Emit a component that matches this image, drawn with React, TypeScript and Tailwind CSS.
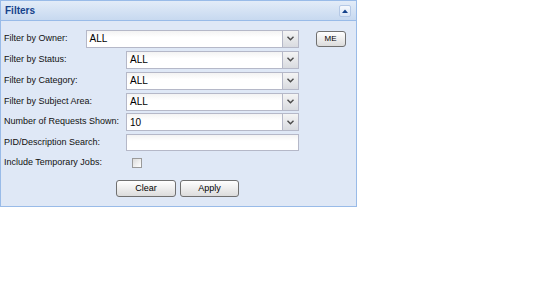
import React from "react";

const Arrow = () => (
  <div className="w-[16px] h-full border-l border-[#b5b8c8] bg-gradient-to-b from-[#f4f4f4] to-[#d9dbe0] flex items-center justify-center">
    <svg width="7" height="5" viewBox="0 0 7 5">
      <path d="M0.5 0.8 L3.5 3.8 L6.5 0.8" fill="none" stroke="#4a4a4a" strokeWidth="1.4" />
    </svg>
  </div>
);

const Select = ({ value, w }: { value: string; w: string }) => (
  <div className={`${w} h-[18px] flex border border-[#b5b8c8] bg-white`}>
    <div className="flex-1 flex items-center pl-[3px] text-[10px] text-black bg-gradient-to-b from-[#f3f3f3] to-white to-[40%]">{value}</div>
    <Arrow />
  </div>
);

const Row = ({ label, h, children }: { label: string; h: string; children?: React.ReactNode }) => (
  <div className={`flex items-center ${h}`}>
    {label && <div className="text-[9px] text-[#111]">{label}</div>}
    {children}
  </div>
);

export default function App() {
  return (
    <div className="w-[540px] h-[304px] bg-white" style={{ fontFamily: "'Liberation Sans', Arial, sans-serif" }}>
      <div className="w-[357px] h-[207px] border border-[#99bbe8] flex flex-col">
        <div className="h-[20px] flex items-center justify-between pl-[4px] pr-[5px] bg-gradient-to-b from-[#e3ecf8] to-[#c7d9f0] border-b border-[#99bbe8]">
          <span className="text-[10px] font-bold text-[#15428b]">Filters</span>
          <div className="w-[12px] h-[12px] rounded-[2px] bg-gradient-to-b from-[#f6f9fd] to-[#dbe6f5] border border-[#b5c9e6] flex items-center justify-center">
            <svg width="6" height="4" viewBox="0 0 6 4"><path d="M0 4 L3 0.5 L6 4 Z" fill="#15428b" /></svg>
          </div>
        </div>
        <div className="flex-1 bg-[#dfe8f6] flex flex-col pl-[3px] pt-[7px]">
          <Row label="Filter by Owner:" h="h-[21px]">
            <div className="ml-[18px]"><Select value="ALL" w="w-[213px]" /></div>
            <div className="ml-[17px] w-[30px] h-[16px] rounded-[3px] border border-[#707070] bg-gradient-to-b from-white to-[#dcdcdc] flex items-center justify-center text-[8px] text-black">ME</div>
          </Row>
          <Row label="Filter by Status:" h="h-[21px]">
            <div className="ml-auto mr-[57px]"><Select value="ALL" w="w-[173px]" /></div>
          </Row>
          <Row label="Filter by Category:" h="h-[21px]">
            <div className="ml-auto mr-[57px]"><Select value="ALL" w="w-[173px]" /></div>
          </Row>
          <Row label="Filter by Subject Area:" h="h-[21px]">
            <div className="ml-auto mr-[57px]"><Select value="ALL" w="w-[173px]" /></div>
          </Row>
          <Row label="Number of Requests Shown:" h="h-[20px]">
            <div className="ml-auto mr-[57px]"><Select value="10" w="w-[173px]" /></div>
          </Row>
          <Row label="PID/Description Search:" h="h-[21px]">
            <div className="ml-auto mr-[57px] w-[173px] h-[17px] border border-[#b5b8c8] bg-gradient-to-b from-[#f3f3f3] to-white to-[40%]" />
          </Row>
          <Row label="Include Temporary Jobs:" h="h-[20px]">
            <div className="ml-[30px] w-[10px] h-[10px] border border-[#9a9a9a] bg-gradient-to-br from-[#dcdcdc] to-white" />
          </Row>
          <div className="flex ml-[112px] mt-[7px] gap-[4px]">
            <div className="w-[60px] h-[17px] rounded-[3px] border border-[#707070] bg-gradient-to-b from-white to-[#dcdcdc] flex items-center justify-center text-[9px] text-black">Clear</div>
            <div className="w-[59px] h-[17px] rounded-[3px] border border-[#707070] bg-gradient-to-b from-white to-[#dcdcdc] flex items-center justify-center text-[9px] text-black">Apply</div>
          </div>
        </div>
      </div>
    </div>
  );
}
